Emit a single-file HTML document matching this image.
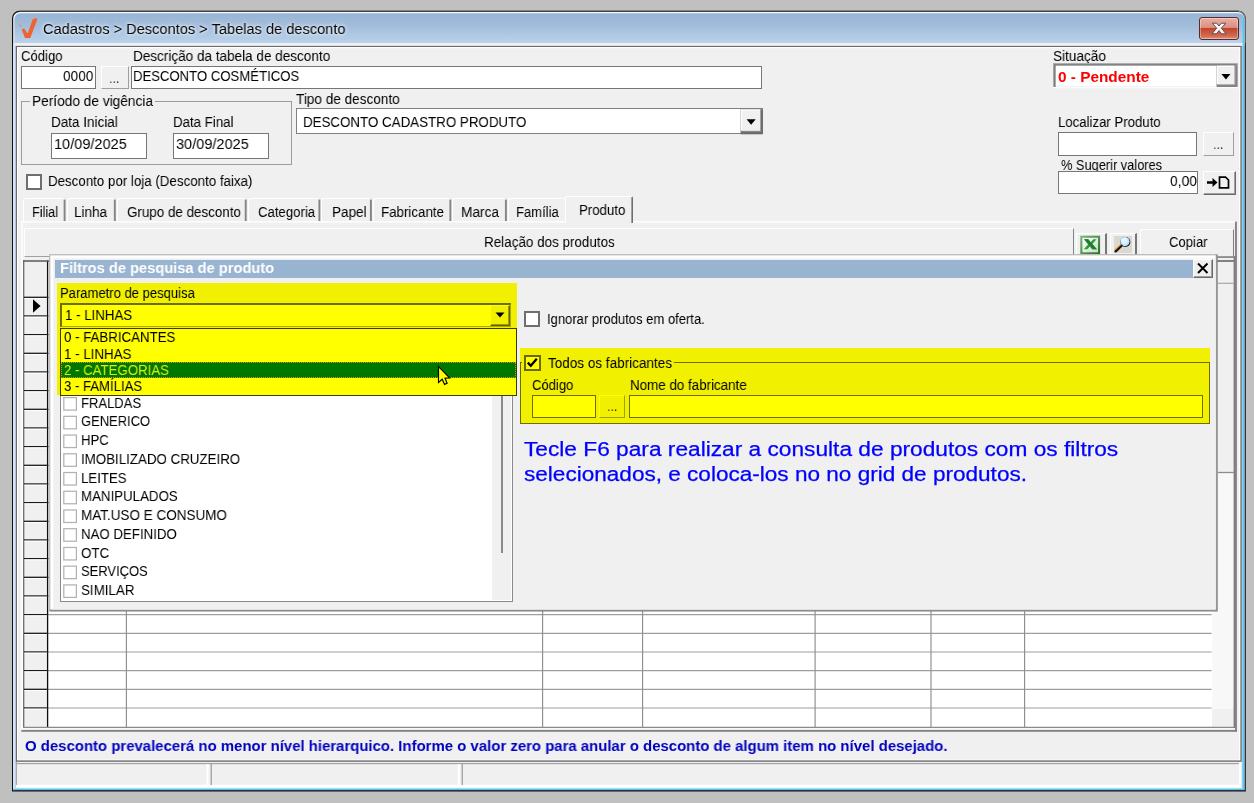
<!DOCTYPE html>
<html><head><meta charset="utf-8"><title>Tabelas de desconto</title>
<style>
html,body{margin:0;padding:0;}
body{width:1254px;height:803px;overflow:hidden;background:#c0c0c0;position:relative;font-family:"Liberation Sans",sans-serif;}
body div,body span,body svg{position:absolute;box-sizing:border-box;}
body span{white-space:pre;transform-origin:0 0;will-change:transform;}
.inp{background:#fff;border:1px solid #767676;}
.yinp{background:#ffff00;border:1px solid #6d6d00;}
.btn{background:#f0f0f0;border:1px solid;border-color:#fff #a0a0a0 #a0a0a0 #fff;}

</style></head>
<body>
<svg style="left:0;top:0" width="1254" height="803" viewBox="0 0 1254 803"><defs><linearGradient id="tg" gradientUnits="userSpaceOnUse" x1="0" y1="13" x2="0" y2="43"><stop offset="0" stop-color="#98b4d5"/><stop offset="0.45" stop-color="#a3bedc"/><stop offset="1" stop-color="#bad2ea"/></linearGradient></defs><path d="M12 791.4 V18 a7.2 7.2 0 0 1 7.2 -7.2 H1238.6 a7.2 7.2 0 0 1 7.2 7.2 V791.5 Z" fill="#0c1317"/><path d="M1238.4 10.8 a7.2 7.2 0 0 1 7.2 7.2 V43 H1244 V18 a6 6 0 0 0 -6 -6 Z" fill="#77828e"/><path d="M13.2 790.1 V18.4 a6.2 6.2 0 0 1 6.2 -6.4 H1238.1 a6.2 6.2 0 0 1 6.2 6.4 V790.1 Z" fill="#f4f8fc"/><path d="M14.4 790.1 V19.6 a6 6 0 0 1 6 -6.4 H1238.3 a6 6 0 0 1 6 6.4 V790.1 Z" fill="url(#tg)"/><rect x="13.2" y="43" width="1231.1" height="747.1" fill="#b9d1ea"/><rect x="13.2" y="43" width="1.5" height="747.1" fill="#e1ebf6"/><rect x="14.7" y="43" width="1229.6" height="2.9" fill="#eef0f3"/><rect x="19" y="10.8" width="1219.5" height="1.2" fill="#414141"/><rect x="1242.6" y="17" width="1.6" height="773.1" fill="#58c8f4"/><rect x="13.2" y="788.6" width="1231.1" height="1.5" fill="#4cc4e6"/><rect x="13.2" y="787.8" width="1229.5" height="0.8" fill="#d3def0"/><rect x="15.9" y="761" width="1225.7" height="26.8" fill="#fff"/><rect x="15.9" y="761" width="1.1" height="24" fill="#a8a8a8"/><rect x="17" y="761" width="1221.9" height="23.8" fill="#f0f0f0"/><rect x="17" y="763" width="1221.9" height="1.2" fill="#a3a3a3"/><rect x="15.9" y="45.9" width="1225.8" height="715.9" fill="#6c6c6c"/><rect x="17" y="47" width="1223.4" height="713.4" fill="#fff"/><rect x="18.2" y="48.2" width="1221" height="711.4" fill="#f0f0f0"/></svg>
<svg style="left:16px;top:14px" width="26" height="28" viewBox="16 14 26 28"><path d="M33 18.6 L37.6 18.4 L30.3 38 L25 38 L21.7 29.4 L24 28.3 L27.6 33.4 Z" fill="#f0622f"/><path d="M18.2 21.8 L21.6 26.4 L20.2 27.2 Z" fill="#f08a5f"/><path d="M31.2 18.3 L34 18.3 L33.5 19.6 Z" fill="#f49a78"/></svg>
<span style="left:43px;top:21.48px;font-size:15.5px;line-height:15.5px;transform:scaleX(0.9420);color:#000;text-shadow:0 0 3px #fff,0 0 5px #e8f0fa;">Cadastros &gt; Descontos &gt; Tabelas de desconto</span>
<div style="left:1199px;top:17px;width:40px;height:22.6px;border:1px solid #5a2a2a;border-radius:3px;background:linear-gradient(#e9b0a4 0,#dc8f80 45%,#c1442c 50%,#cf6a52 85%,#e1937f 100%);box-shadow:inset 0 0 0 1px rgba(255,255,255,.35);"></div>
<svg style="left:1211px;top:22px" width="16" height="13" viewBox="0 0 16 13"><path d="M1.2 1.2 L5.6 1.2 L8 4 L10.4 1.2 L14.8 1.2 L10.3 6.2 L15 11.8 L10.5 11.8 L8 8.6 L5.5 11.8 L1 11.8 L5.7 6.2 Z" fill="#f6f6f6" stroke="#6a4a4a" stroke-width="1"/></svg>
<span style="left:21px;top:48.38px;font-size:15.5px;line-height:15.5px;transform:scaleX(0.8448);color:#000;">Código</span>
<span style="left:133px;top:48.38px;font-size:15.5px;line-height:15.5px;transform:scaleX(0.8735);color:#000;">Descrição da tabela de desconto</span>
<div class="inp" style="left:21px;top:66px;width:74.5px;height:23px;"></div>
<span style="left:63.3px;top:68.38px;font-size:15.5px;line-height:15.5px;transform:scaleX(0.8845);color:#000;">0000</span>
<div class="btn" style="left:100.5px;top:66px;width:28px;height:23px;"></div>
<span style="left:109.3px;top:70.48px;font-size:15.5px;line-height:15.5px;transform:scaleX(0.8048);color:#333;">...</span>
<div class="inp" style="left:130.5px;top:66px;width:631px;height:23px;"></div>
<span style="left:132.7px;top:68.38px;font-size:15.5px;line-height:15.5px;transform:scaleX(0.8476);color:#000;">DESCONTO COSMÉTICOS</span>
<div style="left:21px;top:101px;width:271px;height:63.5px;border:1px solid #9c9c9c;"></div>
<div style="left:30px;top:98px;width:125px;height:8px;background:#f0f0f0;"></div>
<span style="left:32px;top:92.68px;font-size:15.5px;line-height:15.5px;transform:scaleX(0.8831);color:#000;">Período de vigência</span>
<span style="left:50.9px;top:113.58px;font-size:15.5px;line-height:15.5px;transform:scaleX(0.8711);color:#000;">Data Inicial</span>
<span style="left:173.3px;top:113.58px;font-size:15.5px;line-height:15.5px;transform:scaleX(0.8563);color:#000;">Data Final</span>
<div class="inp" style="left:50.5px;top:133px;width:96.5px;height:26px;"></div>
<span style="left:53.7px;top:136.18px;font-size:15.5px;line-height:15.5px;transform:scaleX(0.9384);color:#000;">10/09/2025</span>
<div class="inp" style="left:172.8px;top:133px;width:96.5px;height:26px;"></div>
<span style="left:175.9px;top:136.18px;font-size:15.5px;line-height:15.5px;transform:scaleX(0.9384);color:#000;">30/09/2025</span>
<div style="left:26px;top:173.5px;width:16px;height:16px;background:#fff;border:2px solid #6f6f6f;"></div>
<span style="left:48.3px;top:173.38px;font-size:15.5px;line-height:15.5px;transform:scaleX(0.8596);color:#000;">Desconto por loja (Desconto faixa)</span>
<span style="left:296.3px;top:91.08px;font-size:15.5px;line-height:15.5px;transform:scaleX(0.8763);color:#000;">Tipo de desconto</span>
<div style="left:296px;top:108px;width:467px;height:26.3px;background:#fff;border:1px solid #808080;"></div>
<svg style="left:736px;top:104px" width="32" height="34" viewBox="736 104 32 34"><rect x="740.6" y="109.3" width="22.2" height="25" fill="#6c6c6c"/><rect x="740.6" y="109.3" width="20.4" height="22.2" fill="#a3a3a3"/><rect x="740.6" y="109.3" width="19.3" height="21.2" fill="#fff"/><rect x="741.9" y="110.6" width="18" height="19.9" fill="#f0f0f0"/><path d="M746.6 119.3 L755.7 119.3 L751.15 124.8 Z" fill="#000"/></svg>
<span style="left:302.9px;top:113.98px;font-size:15.5px;line-height:15.5px;transform:scaleX(0.8608);color:#000;">DESCONTO CADASTRO PRODUTO</span>
<span style="left:1053.3px;top:48.18px;font-size:15.5px;line-height:15.5px;transform:scaleX(0.8769);color:#000;">Situação</span>
<svg style="left:1050px;top:60px" width="192" height="32" viewBox="1050 60 192 32"><rect x="1053" y="63.1" width="185.2" height="25.2" fill="#fbfbfb"/><rect x="1053" y="63.1" width="184.8" height="23.8" fill="#a6a6a6"/><rect x="1054.2" y="64.3" width="183" height="22.6" fill="#747474"/><rect x="1055.6" y="65.6" width="181.4" height="21.3" fill="#fff"/><rect x="1216.6" y="65.6" width="20.3" height="21.3" fill="#767676"/><rect x="1216.6" y="65.6" width="19" height="19.8" fill="#a3a3a3"/><rect x="1216.6" y="65.6" width="17.6" height="18.5" fill="#fff"/><rect x="1217.9" y="66.9" width="16.3" height="17.2" fill="#f0f0f0"/><path d="M1221.4 74 L1230.5 74 L1225.95 79.4 Z" fill="#000"/></svg>
<span style="left:1058.3px;top:69.2px;font-size:15px;line-height:15px;transform:scaleX(1.0237);color:#ff0000;font-weight:700;">0 - Pendente</span>
<span style="left:1058.3px;top:113.58px;font-size:15.5px;line-height:15.5px;transform:scaleX(0.8514);color:#000;">Localizar Produto</span>
<div class="inp" style="left:1057.5px;top:132px;width:139.5px;height:23.8px;"></div>
<div class="btn" style="left:1202.5px;top:132px;width:31.5px;height:24px;"></div>
<span style="left:1213.3px;top:136.38px;font-size:15.5px;line-height:15.5px;transform:scaleX(0.8048);color:#333;">...</span>
<span style="left:1061.3px;top:157.18px;font-size:15.5px;line-height:15.5px;transform:scaleX(0.8265);color:#000;">% Sugerir valores</span>
<div class="inp" style="left:1057.5px;top:170.8px;width:140.5px;height:23.7px;"></div>
<span style="left:1169.5px;top:173.38px;font-size:15.5px;line-height:15.5px;transform:scaleX(0.8949);color:#000;">0,00</span>
<div style="left:1203px;top:170.5px;width:32.5px;height:24px;background:#f0f0f0;border:1px solid;border-color:#fff #6a6a6a #6a6a6a #fff;box-shadow:inset -1px -1px 0 #a0a0a0;"></div>
<svg style="left:1206px;top:175px" width="27" height="15" viewBox="0 0 27 15"><path d="M1 6.2 L6.5 6.2 L6.5 3 L11.5 7.5 L6.5 12 L6.5 8.8 L1 8.8 Z" fill="#000"/><path d="M13.5 2.2 L19.5 2.2 L22.5 5 L22.5 12.8 L13.5 12.8 Z" fill="none" stroke="#000" stroke-width="1.7"/></svg>
<div style="left:23.2px;top:198.2px;width:40.8px;height:23.5px;border-top:1.3px solid #fff;border-left:1.3px solid #fff;border-radius:3px 2px 0 0;"></div>
<div style="left:66.5px;top:198.2px;width:47.7px;height:23.5px;border-top:1.3px solid #fff;border-left:1.3px solid #fff;border-radius:3px 2px 0 0;"></div>
<div style="left:116.7px;top:198.2px;width:128.4px;height:23.5px;border-top:1.3px solid #fff;border-left:1.3px solid #fff;border-radius:3px 2px 0 0;"></div>
<div style="left:247.6px;top:198.2px;width:71.2px;height:23.5px;border-top:1.3px solid #fff;border-left:1.3px solid #fff;border-radius:3px 2px 0 0;"></div>
<div style="left:321.3px;top:198.2px;width:49px;height:23.5px;border-top:1.3px solid #fff;border-left:1.3px solid #fff;border-radius:3px 2px 0 0;"></div>
<div style="left:372.8px;top:198.2px;width:77px;height:23.5px;border-top:1.3px solid #fff;border-left:1.3px solid #fff;border-radius:3px 2px 0 0;"></div>
<div style="left:452.3px;top:198.2px;width:53px;height:23.5px;border-top:1.3px solid #fff;border-left:1.3px solid #fff;border-radius:3px 2px 0 0;"></div>
<div style="left:507.8px;top:198.2px;width:57.6px;height:23.5px;border-top:1.3px solid #fff;border-left:1.3px solid #fff;border-radius:3px 2px 0 0;"></div>
<svg style="left:0;top:190px" width="700" height="40" viewBox="0 190 700 40"><line x1="64.6" y1="199.6" x2="64.6" y2="221.3" stroke="#848484" stroke-width="1.9"/><line x1="114.8" y1="199.6" x2="114.8" y2="221.3" stroke="#848484" stroke-width="1.9"/><line x1="245.7" y1="199.6" x2="245.7" y2="221.3" stroke="#848484" stroke-width="1.9"/><line x1="319.4" y1="199.6" x2="319.4" y2="221.3" stroke="#848484" stroke-width="1.9"/><line x1="370.9" y1="199.6" x2="370.9" y2="221.3" stroke="#848484" stroke-width="1.9"/><line x1="450.4" y1="199.6" x2="450.4" y2="221.3" stroke="#848484" stroke-width="1.9"/><line x1="505.9" y1="199.6" x2="505.9" y2="221.3" stroke="#848484" stroke-width="1.9"/></svg>
<span style="left:31.8px;top:203.88px;font-size:15.5px;line-height:15.5px;transform:scaleX(0.8188);color:#000;">Filial</span>
<span style="left:74.4px;top:203.88px;font-size:15.5px;line-height:15.5px;transform:scaleX(0.8725);color:#000;">Linha</span>
<span style="left:127px;top:203.88px;font-size:15.5px;line-height:15.5px;transform:scaleX(0.8639);color:#000;">Grupo de desconto</span>
<span style="left:257.7px;top:203.88px;font-size:15.5px;line-height:15.5px;transform:scaleX(0.8510);color:#000;">Categoria</span>
<span style="left:331.7px;top:203.88px;font-size:15.5px;line-height:15.5px;transform:scaleX(0.8725);color:#000;">Papel</span>
<span style="left:380.5px;top:203.88px;font-size:15.5px;line-height:15.5px;transform:scaleX(0.8603);color:#000;">Fabricante</span>
<span style="left:460.7px;top:203.88px;font-size:15.5px;line-height:15.5px;transform:scaleX(0.8821);color:#000;">Marca</span>
<span style="left:515.8px;top:203.88px;font-size:15.5px;line-height:15.5px;transform:scaleX(0.8421);color:#000;">Família</span>
<svg style="left:0;top:215px" width="1254" height="525" viewBox="0 215 1254 525"><rect x="21.3" y="221.2" width="1214.5" height="1.3" fill="#fff"/><rect x="21.3" y="221.2" width="1.4" height="510" fill="#fff"/><rect x="22" y="728.2" width="1213" height="1.6" fill="#fbfbfb"/><rect x="21.3" y="729.9" width="1215.6" height="1.9" fill="#828282"/><rect x="1235" y="221.6" width="1.9" height="510.2" fill="#828282"/></svg>
<div style="left:565px;top:196px;width:68px;height:27px;background:#f0f0f0;border:1px solid;border-color:#fff #6e6e6e #f0f0f0 #fff;border-bottom:0;border-radius:2px 2px 0 0;box-shadow:inset -1px 0 0 #a0a0a0;"></div>
<span style="left:578.5px;top:202.38px;font-size:15.5px;line-height:15.5px;transform:scaleX(0.8546);color:#000;">Produto</span>
<div style="left:23.5px;top:228.3px;width:1050.8px;height:28.7px;border:solid;border-width:1.2px 1.8px 1.2px 1.2px;border-color:#fff #858585 #a0a0a0 #fff;"></div>
<span style="left:484.2px;top:233.98px;font-size:15.5px;line-height:15.5px;transform:scaleX(0.8674);color:#000;">Relação dos produtos</span>
<div style="left:1075.8px;top:233.4px;width:31px;height:24px;background:#f0f0f0;border:solid;border-width:1.6px 2px 0 1.8px;border-color:#fff #767676 #767676 #fff;"></div>
<svg style="left:1079px;top:234px" width="24" height="24" viewBox="1079 234 24 24"><defs><linearGradient id="xg" x1="0" y1="0" x2="1" y2="1"><stop offset="0" stop-color="#7fb878"/><stop offset="1" stop-color="#2a6a28"/></linearGradient><linearGradient id="xi" x1="0" y1="0" x2="1" y2="1"><stop offset="0" stop-color="#ffffff"/><stop offset="1" stop-color="#c4e0c0"/></linearGradient></defs><rect x="1080.3" y="235.7" width="19.8" height="18.7" fill="url(#xg)"/><rect x="1082.4" y="237.8" width="15.6" height="14.5" fill="url(#xi)"/><path d="M1084 239.2 L1088.2 239.2 L1090.6 242.2 L1093.4 239.2 L1096.6 239.2 L1092.3 244 L1096.9 249.3 L1092.4 249.3 L1090 246.2 L1087.3 249.3 L1083.8 249.3 L1088.3 244.2 Z" fill="#2f9a3c"/><path d="M1084 239.2 L1088.2 239.2 L1096.9 249.3 L1092.4 249.3 Z" fill="#1f7d2c"/></svg>
<div style="left:1110.2px;top:233.4px;width:26.8px;height:24px;background:#f0f0f0;border:solid;border-width:1.6px 2px 0 1.8px;border-color:#fff #767676 #767676 #fff;"></div>
<div style="left:1113.9px;top:236px;width:18px;height:16.5px;background:#dcd8d0;"></div>
<svg style="left:1112px;top:234px" width="24" height="22" viewBox="1112 234 24 22"><path d="M1121.8 245.4 L1115.6 251.2" stroke="#111" stroke-width="2.6" stroke-linecap="round"/><path d="M1120.6 244.6 L1114.8 250" stroke="#f39a3c" stroke-width="1.2" stroke-linecap="round"/><circle cx="1125.4" cy="242" r="5" fill="#101010"/><circle cx="1125" cy="241.6" r="4.6" fill="#bfe6ff"/><circle cx="1124.4" cy="240.8" r="3" fill="#e4f6ff"/></svg>
<div style="left:1140px;top:228.5px;width:94px;height:29px;background:#f0f0f0;border:solid;border-width:1.3px 1.8px 1px 1.5px;border-color:#fff #7e7e7e #8a8a8a #fff;"></div>
<span style="left:1169.1px;top:234.38px;font-size:15.5px;line-height:15.5px;transform:scaleX(0.8430);color:#000;">Copiar</span>
<div style="left:23px;top:260.3px;width:1211px;height:467.7px;background:#fff;"></div>
<div style="left:23px;top:260.3px;width:25px;height:467.7px;background:#f0f0f0;"></div>
<div style="left:1211.6px;top:260.3px;width:22px;height:467.7px;background:#f8f8f8;"></div>
<div style="left:1212px;top:708.5px;width:21.5px;height:19px;background:#f0f0f0;"></div>
<div style="left:1218px;top:262px;width:15.5px;height:210px;background:#f0f0f0;"></div>
<svg style="left:0;top:250px" width="1254" height="490" viewBox="0 250 1254 490"><line x1="48" y1="297.3" x2="1211.6" y2="297.3" stroke="#9e9e9e" stroke-width="1.15"/><line x1="48" y1="315.97" x2="1211.6" y2="315.97" stroke="#9e9e9e" stroke-width="1.15"/><line x1="48" y1="334.63" x2="1211.6" y2="334.63" stroke="#9e9e9e" stroke-width="1.15"/><line x1="48" y1="353.3" x2="1211.6" y2="353.3" stroke="#9e9e9e" stroke-width="1.15"/><line x1="48" y1="371.97" x2="1211.6" y2="371.97" stroke="#9e9e9e" stroke-width="1.15"/><line x1="48" y1="390.63" x2="1211.6" y2="390.63" stroke="#9e9e9e" stroke-width="1.15"/><line x1="48" y1="409.3" x2="1211.6" y2="409.3" stroke="#9e9e9e" stroke-width="1.15"/><line x1="48" y1="427.97" x2="1211.6" y2="427.97" stroke="#9e9e9e" stroke-width="1.15"/><line x1="48" y1="446.64" x2="1211.6" y2="446.64" stroke="#9e9e9e" stroke-width="1.15"/><line x1="48" y1="465.3" x2="1211.6" y2="465.3" stroke="#9e9e9e" stroke-width="1.15"/><line x1="48" y1="483.97" x2="1211.6" y2="483.97" stroke="#9e9e9e" stroke-width="1.15"/><line x1="48" y1="502.64" x2="1211.6" y2="502.64" stroke="#9e9e9e" stroke-width="1.15"/><line x1="48" y1="521.3" x2="1211.6" y2="521.3" stroke="#9e9e9e" stroke-width="1.15"/><line x1="48" y1="539.97" x2="1211.6" y2="539.97" stroke="#9e9e9e" stroke-width="1.15"/><line x1="48" y1="558.64" x2="1211.6" y2="558.64" stroke="#9e9e9e" stroke-width="1.15"/><line x1="48" y1="577.31" x2="1211.6" y2="577.31" stroke="#9e9e9e" stroke-width="1.15"/><line x1="48" y1="595.97" x2="1211.6" y2="595.97" stroke="#9e9e9e" stroke-width="1.15"/><line x1="48" y1="614.64" x2="1211.6" y2="614.64" stroke="#9e9e9e" stroke-width="1.15"/><line x1="48" y1="633.31" x2="1211.6" y2="633.31" stroke="#9e9e9e" stroke-width="1.15"/><line x1="48" y1="651.97" x2="1211.6" y2="651.97" stroke="#9e9e9e" stroke-width="1.15"/><line x1="48" y1="670.64" x2="1211.6" y2="670.64" stroke="#9e9e9e" stroke-width="1.15"/><line x1="48" y1="689.31" x2="1211.6" y2="689.31" stroke="#9e9e9e" stroke-width="1.15"/><line x1="48" y1="707.97" x2="1211.6" y2="707.97" stroke="#9e9e9e" stroke-width="1.15"/><line x1="126.4" y1="261" x2="126.4" y2="727" stroke="#8e8e8e" stroke-width="1.15"/><line x1="542.6" y1="261" x2="542.6" y2="727" stroke="#8e8e8e" stroke-width="1.15"/><line x1="642.6" y1="261" x2="642.6" y2="727" stroke="#8e8e8e" stroke-width="1.15"/><line x1="815.1" y1="261" x2="815.1" y2="727" stroke="#8e8e8e" stroke-width="1.15"/><line x1="931" y1="261" x2="931" y2="727" stroke="#8e8e8e" stroke-width="1.15"/><line x1="1024.6" y1="261" x2="1024.6" y2="727" stroke="#8e8e8e" stroke-width="1.15"/><line x1="23.7" y1="260.5" x2="23.7" y2="727" stroke="#6a6a6a" stroke-width="1.3"/><line x1="47.6" y1="260.5" x2="47.6" y2="727" stroke="#0c0c0c" stroke-width="1.3"/><line x1="24" y1="297.3" x2="48" y2="297.3" stroke="#1a1a1a" stroke-width="1.3"/><line x1="24.5" y1="298.5" x2="47" y2="298.5" stroke="#fff" stroke-width="1"/><line x1="24" y1="315.97" x2="48" y2="315.97" stroke="#1a1a1a" stroke-width="1.3"/><line x1="24.5" y1="317.17" x2="47" y2="317.17" stroke="#fff" stroke-width="1"/><line x1="24" y1="334.63" x2="48" y2="334.63" stroke="#1a1a1a" stroke-width="1.3"/><line x1="24.5" y1="335.83" x2="47" y2="335.83" stroke="#fff" stroke-width="1"/><line x1="24" y1="353.3" x2="48" y2="353.3" stroke="#1a1a1a" stroke-width="1.3"/><line x1="24.5" y1="354.5" x2="47" y2="354.5" stroke="#fff" stroke-width="1"/><line x1="24" y1="371.97" x2="48" y2="371.97" stroke="#1a1a1a" stroke-width="1.3"/><line x1="24.5" y1="373.17" x2="47" y2="373.17" stroke="#fff" stroke-width="1"/><line x1="24" y1="390.63" x2="48" y2="390.63" stroke="#1a1a1a" stroke-width="1.3"/><line x1="24.5" y1="391.83" x2="47" y2="391.83" stroke="#fff" stroke-width="1"/><line x1="24" y1="409.3" x2="48" y2="409.3" stroke="#1a1a1a" stroke-width="1.3"/><line x1="24.5" y1="410.5" x2="47" y2="410.5" stroke="#fff" stroke-width="1"/><line x1="24" y1="427.97" x2="48" y2="427.97" stroke="#1a1a1a" stroke-width="1.3"/><line x1="24.5" y1="429.17" x2="47" y2="429.17" stroke="#fff" stroke-width="1"/><line x1="24" y1="446.64" x2="48" y2="446.64" stroke="#1a1a1a" stroke-width="1.3"/><line x1="24.5" y1="447.84" x2="47" y2="447.84" stroke="#fff" stroke-width="1"/><line x1="24" y1="465.3" x2="48" y2="465.3" stroke="#1a1a1a" stroke-width="1.3"/><line x1="24.5" y1="466.5" x2="47" y2="466.5" stroke="#fff" stroke-width="1"/><line x1="24" y1="483.97" x2="48" y2="483.97" stroke="#1a1a1a" stroke-width="1.3"/><line x1="24.5" y1="485.17" x2="47" y2="485.17" stroke="#fff" stroke-width="1"/><line x1="24" y1="502.64" x2="48" y2="502.64" stroke="#1a1a1a" stroke-width="1.3"/><line x1="24.5" y1="503.84" x2="47" y2="503.84" stroke="#fff" stroke-width="1"/><line x1="24" y1="521.3" x2="48" y2="521.3" stroke="#1a1a1a" stroke-width="1.3"/><line x1="24.5" y1="522.5" x2="47" y2="522.5" stroke="#fff" stroke-width="1"/><line x1="24" y1="539.97" x2="48" y2="539.97" stroke="#1a1a1a" stroke-width="1.3"/><line x1="24.5" y1="541.17" x2="47" y2="541.17" stroke="#fff" stroke-width="1"/><line x1="24" y1="558.64" x2="48" y2="558.64" stroke="#1a1a1a" stroke-width="1.3"/><line x1="24.5" y1="559.84" x2="47" y2="559.84" stroke="#fff" stroke-width="1"/><line x1="24" y1="577.31" x2="48" y2="577.31" stroke="#1a1a1a" stroke-width="1.3"/><line x1="24.5" y1="578.51" x2="47" y2="578.51" stroke="#fff" stroke-width="1"/><line x1="24" y1="595.97" x2="48" y2="595.97" stroke="#1a1a1a" stroke-width="1.3"/><line x1="24.5" y1="597.17" x2="47" y2="597.17" stroke="#fff" stroke-width="1"/><line x1="24" y1="614.64" x2="48" y2="614.64" stroke="#1a1a1a" stroke-width="1.3"/><line x1="24.5" y1="615.84" x2="47" y2="615.84" stroke="#fff" stroke-width="1"/><line x1="24" y1="633.31" x2="48" y2="633.31" stroke="#1a1a1a" stroke-width="1.3"/><line x1="24.5" y1="634.51" x2="47" y2="634.51" stroke="#fff" stroke-width="1"/><line x1="24" y1="651.97" x2="48" y2="651.97" stroke="#1a1a1a" stroke-width="1.3"/><line x1="24.5" y1="653.17" x2="47" y2="653.17" stroke="#fff" stroke-width="1"/><line x1="24" y1="670.64" x2="48" y2="670.64" stroke="#1a1a1a" stroke-width="1.3"/><line x1="24.5" y1="671.84" x2="47" y2="671.84" stroke="#fff" stroke-width="1"/><line x1="24" y1="689.31" x2="48" y2="689.31" stroke="#1a1a1a" stroke-width="1.3"/><line x1="24.5" y1="690.51" x2="47" y2="690.51" stroke="#fff" stroke-width="1"/><line x1="24" y1="707.97" x2="48" y2="707.97" stroke="#1a1a1a" stroke-width="1.3"/><line x1="24.5" y1="709.17" x2="47" y2="709.17" stroke="#fff" stroke-width="1"/><line x1="23" y1="261" x2="1234" y2="261" stroke="#5a5a5a" stroke-width="1.4"/><line x1="23" y1="727.3" x2="1235" y2="727.3" stroke="#8a8a8a" stroke-width="1.3"/><line x1="1234.3" y1="256" x2="1234.3" y2="728" stroke="#7e7e7e" stroke-width="1.4"/><line x1="1218" y1="283.3" x2="1234" y2="283.3" stroke="#a8a8a8" stroke-width="1.2"/><line x1="1218" y1="472.5" x2="1234" y2="472.5" stroke="#8c8c8c" stroke-width="1.3"/><line x1="1218" y1="256.6" x2="1234" y2="256.6" stroke="#9a9a9a" stroke-width="1.2"/></svg>
<svg style="left:32px;top:298px" width="10" height="16" viewBox="0 0 10 16"><path d="M1 1.3 L8.6 8 L1 14.7 Z" fill="#000"/></svg>
<svg style="left:40px;top:250px" width="1190" height="370" viewBox="40 250 1190 370"><rect x="49.4" y="254.4" width="1168.3" height="357.1" fill="#7e7e7e"/><rect x="49.4" y="254.4" width="1167.2" height="356" fill="#a6a6a6"/><rect x="49.4" y="254.4" width="1166.2" height="355" fill="#cdcdcd"/><rect x="50.5" y="255.5" width="1165.1" height="353.9" fill="#fff"/><rect x="53.3" y="258.3" width="1162.3" height="351.1" fill="#f0f0f0"/></svg>
<div style="left:54.5px;top:259.5px;width:1138.5px;height:18.5px;background:#99b4d1;"></div>
<span style="left:59.5px;top:260.4px;font-size:15px;line-height:15px;transform:scaleX(0.9772);color:#fff;font-weight:700;">Filtros de pesquisa de produto</span>
<div style="left:1193px;top:259.3px;width:20px;height:19px;background:#f0f0f0;border:1px solid;border-color:#fff #6a6a6a #6a6a6a #fff;box-shadow:inset -1px -1px 0 #a0a0a0;"></div>
<svg style="left:1196px;top:262px" width="14" height="13" viewBox="0 0 14 13"><path d="M2 1.5 L11.5 11 M11.5 1.5 L2 11" stroke="#000" stroke-width="2"/></svg>
<div style="left:59.5px;top:326px;width:453px;height:275.5px;background:#fff;border:1px solid #8a8a8a;border-width:1px 1.5px 1.5px 1px;"></div>
<div style="left:492.3px;top:327px;width:19.2px;height:273px;background:#f0f0f0;"></div>
<div style="left:501px;top:395px;width:1.6px;height:157.5px;background:#8a8a8a;"></div>
<span style="left:81px;top:394.68px;font-size:15.5px;line-height:15.5px;transform:scaleX(0.8406);color:#000;">FRALDAS</span>
<span style="left:81px;top:413.41px;font-size:15.5px;line-height:15.5px;transform:scaleX(0.8357);color:#000;">GENERICO</span>
<span style="left:81px;top:432.14px;font-size:15.5px;line-height:15.5px;transform:scaleX(0.8493);color:#000;">HPC</span>
<span style="left:81px;top:450.87px;font-size:15.5px;line-height:15.5px;transform:scaleX(0.8598);color:#000;">IMOBILIZADO CRUZEIRO</span>
<span style="left:81px;top:469.6px;font-size:15.5px;line-height:15.5px;transform:scaleX(0.8536);color:#000;">LEITES</span>
<span style="left:81px;top:488.33px;font-size:15.5px;line-height:15.5px;transform:scaleX(0.8569);color:#000;">MANIPULADOS</span>
<span style="left:81px;top:507.06px;font-size:15.5px;line-height:15.5px;transform:scaleX(0.8703);color:#000;">MAT.USO E CONSUMO</span>
<span style="left:81px;top:525.79px;font-size:15.5px;line-height:15.5px;transform:scaleX(0.8548);color:#000;">NAO DEFINIDO</span>
<span style="left:81px;top:544.52px;font-size:15.5px;line-height:15.5px;transform:scaleX(0.8619);color:#000;">OTC</span>
<span style="left:81px;top:563.25px;font-size:15.5px;line-height:15.5px;transform:scaleX(0.8355);color:#000;">SERVIÇOS</span>
<span style="left:81px;top:581.98px;font-size:15.5px;line-height:15.5px;transform:scaleX(0.8627);color:#000;">SIMILAR</span>
<svg style="left:60px;top:390px" width="20" height="215" viewBox="60 390 20 215"><rect x="63.8" y="397.6" width="12.6" height="12.5" fill="#fff" stroke="#b2b2b2" stroke-width="1.25"/><rect x="63.8" y="416.33" width="12.6" height="12.5" fill="#fff" stroke="#b2b2b2" stroke-width="1.25"/><rect x="63.8" y="435.06" width="12.6" height="12.5" fill="#fff" stroke="#b2b2b2" stroke-width="1.25"/><rect x="63.8" y="453.79" width="12.6" height="12.5" fill="#fff" stroke="#b2b2b2" stroke-width="1.25"/><rect x="63.8" y="472.52" width="12.6" height="12.5" fill="#fff" stroke="#b2b2b2" stroke-width="1.25"/><rect x="63.8" y="491.25" width="12.6" height="12.5" fill="#fff" stroke="#b2b2b2" stroke-width="1.25"/><rect x="63.8" y="509.98" width="12.6" height="12.5" fill="#fff" stroke="#b2b2b2" stroke-width="1.25"/><rect x="63.8" y="528.71" width="12.6" height="12.5" fill="#fff" stroke="#b2b2b2" stroke-width="1.25"/><rect x="63.8" y="547.44" width="12.6" height="12.5" fill="#fff" stroke="#b2b2b2" stroke-width="1.25"/><rect x="63.8" y="566.17" width="12.6" height="12.5" fill="#fff" stroke="#b2b2b2" stroke-width="1.25"/><rect x="63.8" y="584.9" width="12.6" height="12.5" fill="#fff" stroke="#b2b2b2" stroke-width="1.25"/></svg>
<div style="left:57px;top:283px;width:460px;height:112.3px;background:#f0f000;"></div>
<span style="left:60.2px;top:284.68px;font-size:15.5px;line-height:15.5px;transform:scaleX(0.8411);color:#000;">Parametro de pesquisa</span>
<div style="left:60px;top:302.5px;width:451px;height:24px;background:#ffff00;border:1px solid;border-width:2px 1px 1px 2px;border-color:#6e6e00 #a8a800 #a8a800 #6e6e00;"></div>
<div style="left:489.7px;top:304.5px;width:20px;height:21px;background:#f0f000;border:1px solid;border-color:#ffff00 #626200 #626200 #ffff00;box-shadow:inset -1px -1px 0 #9c9c00;"></div>
<svg style="left:494.5px;top:312px" width="10" height="6" viewBox="0 0 10 6"><path d="M0.5 0.5 L9.5 0.5 L5 5.5 Z" fill="#000"/></svg>
<span style="left:64.5px;top:307.08px;font-size:15.5px;line-height:15.5px;transform:scaleX(0.8572);color:#000;">1 - LINHAS</span>
<div style="left:60px;top:328px;width:457px;height:68px;background:#ffff00;border:1px solid #3c3c00;"></div>
<div style="left:61px;top:362.2px;width:455px;height:16px;background:#007700;border:1px dotted #c8a000;"></div>
<span style="left:64.2px;top:329.38px;font-size:15.5px;line-height:15.5px;transform:scaleX(0.8557);color:#000;">0 - FABRICANTES</span>
<span style="left:64.2px;top:345.68px;font-size:15.5px;line-height:15.5px;transform:scaleX(0.8611);color:#000;">1 - LINHAS</span>
<span style="left:64.2px;top:361.88px;font-size:15.5px;line-height:15.5px;transform:scaleX(0.8545);color:#d8ee10;">2 - CATEGORIAS</span>
<span style="left:64.2px;top:378.18px;font-size:15.5px;line-height:15.5px;transform:scaleX(0.8484);color:#000;">3 - FAMÍLIAS</span>
<svg style="left:430px;top:360px" width="30" height="30" viewBox="430 360 30 30"><path d="M438.5 366.6 L438.5 382.4 L442.2 379.2 L444.6 384.4 L447.1 383.3 L445 378.2 L449.6 377.9 Z" fill="#ffff00" stroke="#000" stroke-width="1.15" stroke-linejoin="miter"/></svg>
<div style="left:524px;top:311px;width:16px;height:16px;background:#fff;border:2px solid #6f6f6f;"></div>
<span style="left:547px;top:310.68px;font-size:15.5px;line-height:15.5px;transform:scaleX(0.8401);color:#000;">Ignorar produtos em oferta.</span>
<div style="left:519.5px;top:347.7px;width:690.5px;height:76.8px;background:#f0f000;border-bottom:1px solid #a8a878;"></div>
<div style="left:520px;top:362px;width:690px;height:61.5px;border:1px solid #6e6e00;"></div>
<div style="left:522px;top:353px;width:152px;height:18px;background:#f0f000;"></div>
<div style="left:524px;top:354.5px;width:16.5px;height:16px;background:#ffff00;border:2px solid #6a6a00;"></div>
<svg style="left:526px;top:356.5px" width="13" height="12" viewBox="0 0 13 12"><path d="M1.8 5.6 L4.8 8.8 L10.8 1.8" fill="none" stroke="#000" stroke-width="2.3"/></svg>
<span style="left:547.5px;top:354.58px;font-size:15.5px;line-height:15.5px;transform:scaleX(0.8722);color:#000;">Todos os fabricantes</span>
<span style="left:532.2px;top:377.38px;font-size:15.5px;line-height:15.5px;transform:scaleX(0.8407);color:#000;">Código</span>
<span style="left:629.5px;top:377.38px;font-size:15.5px;line-height:15.5px;transform:scaleX(0.8626);color:#000;">Nome do fabricante</span>
<div class="yinp" style="left:531.5px;top:394.5px;width:64.5px;height:23.5px;"></div>
<div style="left:599.3px;top:394.5px;width:26px;height:23.5px;background:#f0f000;border:1px solid;border-color:#ffff00 #a0a000 #a0a000 #ffff00;"></div>
<span style="left:607.3px;top:397.88px;font-size:15.5px;line-height:15.5px;transform:scaleX(0.8048);color:#333;">...</span>
<div class="yinp" style="left:629px;top:394.5px;width:574px;height:23.5px;"></div>
<span style="left:523.8px;top:440.39px;font-size:19.5px;line-height:19.5px;transform:scaleX(1.1640);color:#0000ff;-webkit-text-stroke:0.25px #0000ff;">Tecle F6 para realizar a consulta de produtos com os filtros</span>
<span style="left:523.8px;top:465.29px;font-size:19.5px;line-height:19.5px;transform:scaleX(1.1571);color:#0000ff;-webkit-text-stroke:0.25px #0000ff;">selecionados, e coloca-los no no grid de produtos.</span>
<span style="left:25.2px;top:737.6px;font-size:15px;line-height:15px;transform:scaleX(0.9952);color:#0000c0;font-weight:700;">O desconto prevalecerá no menor nível hierarquico. Informe o valor zero para anular o desconto de algum item no nível desejado.</span>
<svg style="left:0;top:760px" width="1254" height="30" viewBox="0 760 1254 30"><rect x="206.6" y="764" width="1.9" height="21" fill="#fff"/><rect x="210.6" y="763.2" width="1.3" height="21.8" fill="#a0a0a0"/><rect x="457.8" y="764" width="1.9" height="21" fill="#fff"/><rect x="461.6" y="763.2" width="1.3" height="21.8" fill="#a0a0a0"/></svg>
</body></html>
